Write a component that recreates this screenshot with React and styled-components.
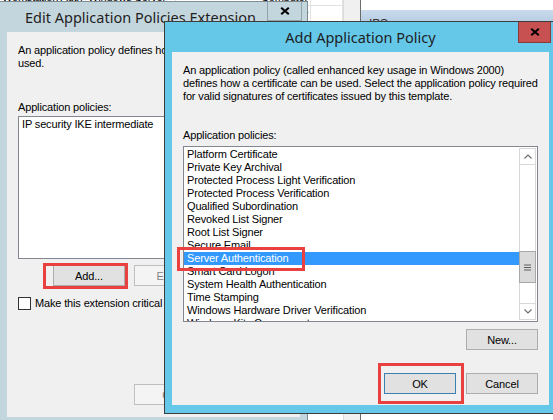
import React from 'react';
import styled, { createGlobalStyle, css } from 'styled-components';

const GlobalStyle = createGlobalStyle`
  html, body { margin: 0; padding: 0; background: #ffffff; }
  body {
    font-family: "Liberation Sans", Arial, sans-serif;
    font-size: 11px;
    letter-spacing: -0.15px;
    color: #000;
  }
  * { box-sizing: border-box; }
`;

const Desktop = styled.div`
  position: relative;
  width: 553px;
  height: 420px;
  overflow: hidden;
  background: #ffffff;
`;

/* ---------- console behind the dialogs ---------- */

const ConsoleWindow = styled.div`
  position: absolute;
  left: 0;
  top: -11px;
  width: 361px;
  height: 445px;
  display: grid;
  grid-template-columns: 1fr 17px;
  background: #ffffff;
  border-right: 1px solid #6b6b6b;
`;

const ConsoleList = styled.div`
  display: flex;
  flex-direction: column;
`;

const ConsoleRow = styled.div`
  display: grid;
  grid-template-columns: 86px 90px 135px 1fr;
  height: 17px;
  border-bottom: 1px solid #e2e2e2;
`;

const ConsoleCell = styled.div`
  padding: 2px 2px;
  line-height: 13px;
  white-space: nowrap;
  overflow: hidden;
  border-right: 1px solid #e2e2e2;
  text-align: ${(p) => (p.$end ? 'right' : 'left')};
`;

const ConsoleScroll = styled.div`
  background: #f0f0f0;
  border-left: 1px solid #dcdcdc;
`;

const DetailsPane = styled.div`
  position: absolute;
  left: 361px;
  top: 0;
  right: 0;
  bottom: 0;
  padding-top: 10px;
  background: #ffffff;
`;

const PaneHeader = styled.div`
  height: 14px;
  padding-left: 8px;
  background: linear-gradient(#c9dbec, #b4cbe2);
  font-size: 12px;
  line-height: 28px;
  color: #333;
  overflow: hidden;
`;

/* ---------- dialog windows ---------- */

const Window = styled.section`
  position: absolute;
  display: flex;
  flex-direction: column;
  border: 1px solid ${(p) => (p.$active ? '#3d3d3d' : '#7d8c92')};
  background: ${(p) => (p.$active ? '#65c8e9' : '#c4d6dd')};
`;

const EditWindow = styled(Window)`
  left: -1px;
  top: 1px;
  width: 309px;
  height: 425px;
`;

const AddWindow = styled(Window)`
  left: 164px;
  top: 21px;
  width: 393px;
  height: 393px;
`;

const TitleBar = styled.header`
  position: relative;
  flex: none;
  height: 30px;
  display: flex;
  align-items: center;
  justify-content: ${(p) => (p.$center ? 'center' : 'flex-start')};
  padding-left: ${(p) => (p.$center ? '0' : '25px')};
  padding-bottom: 1px;
  font-family: "Noto Sans", "Open Sans", sans-serif;
  font-size: 14.5px;
  letter-spacing: 0;
  color: #1e1e1e;
  white-space: nowrap;
`;

const CloseButton = styled.div`
  position: absolute;
  top: 0;
  right: 5px;
  display: flex;
  align-items: center;
  justify-content: center;
  ${(p) =>
    p.$active
      ? css`
          width: 33px;
          height: 21px;
          background: #c75050;
          border: 1px solid #8a3a3a;
          border-top: none;
        `
      : css`
          width: 35px;
          height: 19px;
          border: 1px solid #93a3a9;
          border-top: none;
        `}
`;

const Frame = styled.div`
  flex: 1;
  display: flex;
  padding: 0 7px 8px;
  min-height: 0;
`;

const Client = styled.div`
  flex: 1;
  display: flex;
  flex-direction: column;
  padding: 12px 11px ${(p) => p.$bottom}px;
  background: #f0f0f0;
  min-width: 0;
`;

const Description = styled.p`
  margin: 0;
  line-height: 13px;
  white-space: nowrap;
`;

const FieldLabel = styled.div`
  margin-top: ${(p) => p.$gap}px;
  line-height: 13px;
`;

const ListBox = styled.div`
  margin-top: ${(p) => p.$gap}px;
  height: ${(p) => p.$height}px;
  display: flex;
  border: 1px solid #828790;
  background: #ffffff;
  overflow: hidden;
  flex: none;
`;

const ListItems = styled.ul`
  flex: 1;
  margin: 0;
  padding: 1px 0 0;
  list-style: none;
  overflow: hidden;
  min-width: 0;
`;

const ListItem = styled.li`
  height: 13px;
  line-height: 13px;
  padding-left: 3px;
  white-space: nowrap;
  ${(p) =>
    p.$selected &&
    css`
      background: #3399ff;
      color: #ffffff;
    `}
`;

const ScrollBar = styled.div`
  flex: none;
  width: 17px;
  margin: 1px 1px 1px 0;
  display: flex;
  flex-direction: column;
  border-left: 1px solid #d8d8d8;
  border-right: 1px solid #d8d8d8;
`;

const ScrollArrow = styled.div`
  flex: none;
  height: 17px;
  display: flex;
  align-items: center;
  justify-content: center;
  border-top: 1px solid #d8d8d8;
  border-bottom: 1px solid #d8d8d8;
`;

const ScrollTrack = styled.div`
  flex: 1;
  padding-top: ${(p) => p.$offset}px;
`;

const ScrollThumb = styled.div`
  height: 32px;
  margin: 0 -1px;
  display: flex;
  align-items: center;
  justify-content: center;
  background: #dadada;
  border: 1px solid #a8a8a8;
`;

const ButtonRow = styled.div`
  display: flex;
  justify-content: ${(p) => p.$justify || 'flex-end'};
  gap: ${(p) => p.$spacing || 9}px;
  margin-top: ${(p) => (p.$push ? 'auto' : `${p.$gap}px`)};
  padding-left: ${(p) => p.$indent || 0}px;
  flex: none;
`;

const PushButton = styled.div`
  width: 72px;
  height: 21px;
  display: flex;
  align-items: center;
  justify-content: center;
  background: #e1e1e1;
  border: 1px solid #adadad;
  color: #000;
  ${(p) =>
    p.$default &&
    css`
      border-color: #3c7fb1;
    `}
  ${(p) =>
    p.$dim &&
    css`
      background: #f4f4f4;
      border-color: #bfbfbf;
      color: #838383;
    `}
`;

const CheckRow = styled.label`
  display: flex;
  align-items: center;
  gap: 4px;
  margin-top: 11px;
  height: 13px;
  line-height: 13px;
  white-space: nowrap;
`;

const CheckBox = styled.span`
  flex: none;
  width: 13px;
  height: 13px;
  background: #ffffff;
  border: 1px solid #333333;
`;

const Highlight = styled.div`
  position: absolute;
  border: 3px solid #e8413f;
  pointer-events: none;
`;

const AddHighlight = styled(Highlight)`
  left: 43px;
  top: 263px;
  width: 85px;
  height: 26px;
`;

const ServerHighlight = styled(Highlight)`
  left: 177px;
  top: 247px;
  width: 128px;
  height: 24px;
`;

const OkHighlight = styled(Highlight)`
  left: 378px;
  top: 363px;
  width: 86px;
  height: 41px;
`;

/* ---------- small drawings ---------- */

const CloseGlyph = () => (
  <svg width="10" height="8" viewBox="0 0 10 8">
    <path d="M1.2 0.8 L8.8 7.2 M8.8 0.8 L1.2 7.2" stroke="#000" strokeWidth="2.1" fill="none" />
  </svg>
);

const Chevron = ({ down }) => (
  <svg width="8" height="5" viewBox="0 0 8 5">
    <path
      d={down ? 'M0.5 0.5 L4 4 L7.5 0.5' : 'M0.5 4.5 L4 1 L7.5 4.5'}
      stroke="#6a6a6a"
      strokeWidth="1.1"
      fill="none"
    />
  </svg>
);

const Grip = () => (
  <svg width="7" height="7" viewBox="0 0 7 7">
    <path d="M0 1 H7 M0 3.5 H7 M0 6 H7" stroke="#5e5e5e" strokeWidth="1.2" />
  </svg>
);

const consoleRows = [
  ['Workstation Auth', 'Windows Server', 'Computer'],
  ['User', 'Windows 2000', 'Directory'],
  ['Web Server', 'Windows 2000', 'Directory'],
  ['Subordinate CA', 'Windows 2000', 'Directory'],
];

const policies = [
  'Platform Certificate',
  'Private Key Archival',
  'Protected Process Light Verification',
  'Protected Process Verification',
  'Qualified Subordination',
  'Revoked List Signer',
  'Root List Signer',
  'Secure Email',
  'Server Authentication',
  'Smart Card Logon',
  'System Health Authentication',
  'Time Stamping',
  'Windows Hardware Driver Verification',
  'Windows Kits Component',
];

export default function App() {
  return (
    <>
      <GlobalStyle />
      <Desktop>
        <ConsoleWindow>
          <ConsoleList>
            {consoleRows.map((r, i) => (
              <ConsoleRow key={i}>
                <ConsoleCell>{r[0]}</ConsoleCell>
                <ConsoleCell>{r[1]}</ConsoleCell>
                <ConsoleCell $end>{r[2]}</ConsoleCell>
                <ConsoleCell />
              </ConsoleRow>
            ))}
          </ConsoleList>
          <ConsoleScroll />
        </ConsoleWindow>
        <DetailsPane>
          <PaneHeader>IPS</PaneHeader>
        </DetailsPane>

        <EditWindow>
          <TitleBar>
            Edit Application Policies Extension
            <CloseButton>
              <CloseGlyph />
            </CloseButton>
          </TitleBar>
          <Frame>
            <Client $bottom={12}>
              <Description>
                An application policy defines how a certificate can be
                <br />
                used.
              </Description>
              <FieldLabel $gap={31}>Application policies:</FieldLabel>
              <ListBox $gap={2} $height={143}>
                <ListItems>
                  <ListItem>IP security IKE intermediate</ListItem>
                </ListItems>
              </ListBox>
              <ButtonRow $gap={6} $justify="flex-start" $indent={35}>
                <PushButton>Add...</PushButton>
                <PushButton $dim>Edit...</PushButton>
                <PushButton $dim>Remove</PushButton>
              </ButtonRow>
              <CheckRow>
                <CheckBox />
                Make this extension critical
              </CheckRow>
              <ButtonRow $push $indent={116} $justify="flex-start">
                <PushButton $dim>OK</PushButton>
                <PushButton $dim>Cancel</PushButton>
              </ButtonRow>
            </Client>
          </Frame>
        </EditWindow>

        <AddWindow $active>
          <TitleBar $center>
            Add Application Policy
            <CloseButton $active>
              <CloseGlyph />
            </CloseButton>
          </TitleBar>
          <Frame>
            <Client $bottom={11}>
              <Description>
                An application policy (called enhanced key usage in Windows 2000)
                <br />
                defines how a certificate can be used. Select the application policy required
                <br />
                for valid signatures of certificates issued by this template.
              </Description>
              <FieldLabel $gap={26}>Application policies:</FieldLabel>
              <ListBox $gap={4} $height={176}>
                <ListItems>
                  {policies.map((p) => (
                    <ListItem key={p} $selected={p === 'Server Authentication'}>
                      {p}
                    </ListItem>
                  ))}
                </ListItems>
                <ScrollBar>
                  <ScrollArrow>
                    <Chevron />
                  </ScrollArrow>
                  <ScrollTrack $offset={86}>
                    <ScrollThumb>
                      <Grip />
                    </ScrollThumb>
                  </ScrollTrack>
                  <ScrollArrow>
                    <Chevron down />
                  </ScrollArrow>
                </ScrollBar>
              </ListBox>
              <ButtonRow $gap={7}>
                <PushButton>New...</PushButton>
              </ButtonRow>
              <ButtonRow $gap={23} $spacing={10}>
                <PushButton $default>OK</PushButton>
                <PushButton>Cancel</PushButton>
              </ButtonRow>
            </Client>
          </Frame>
        </AddWindow>

        <AddHighlight />
        <ServerHighlight />
        <OkHighlight />
      </Desktop>
    </>
  );
}
